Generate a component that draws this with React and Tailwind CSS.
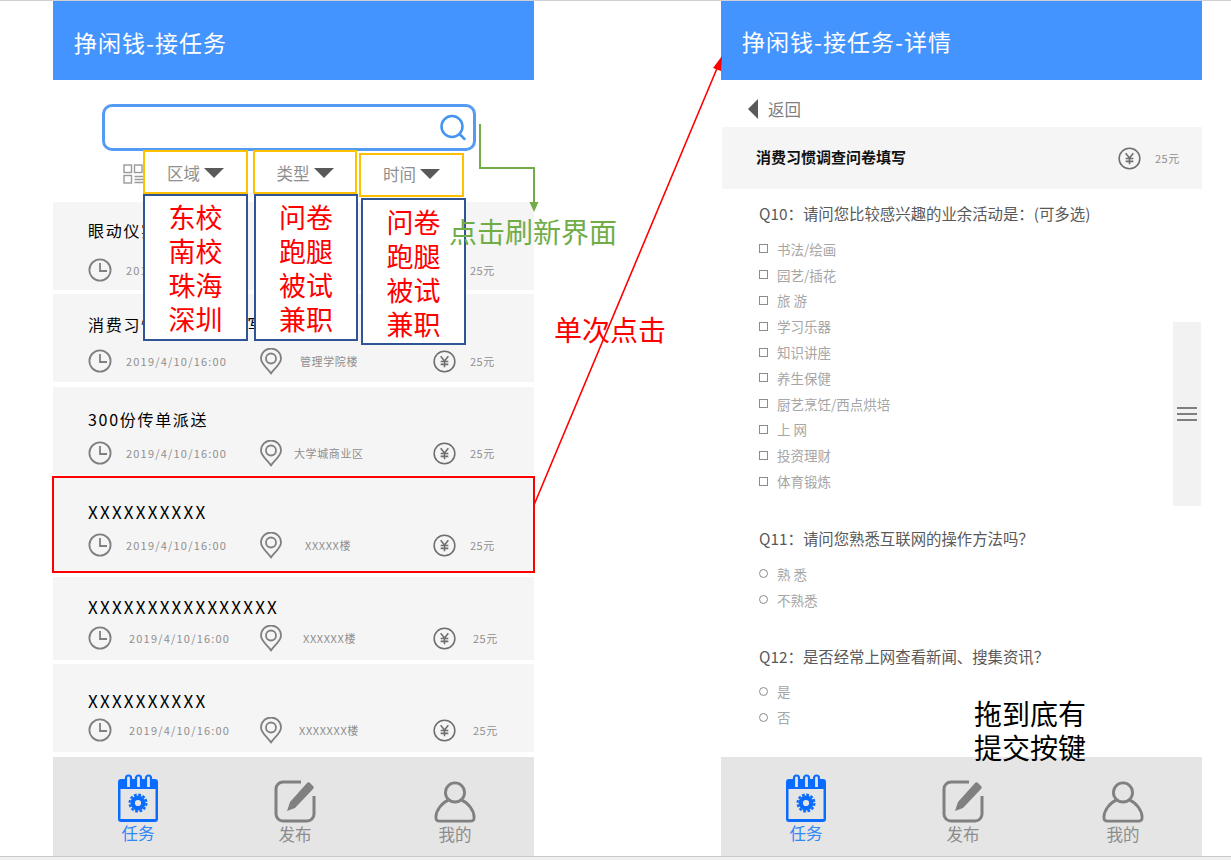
import React from 'react';

const FONT = "font-['Noto_Sans_CJK_SC','Noto_Sans',sans-serif]";

const ClockIcon = () => (
  <svg width="24" height="24" viewBox="0 0 24 24" fill="none" stroke="#808080" strokeWidth="1.8">
    <circle cx="12" cy="12" r="10.6" />
    <path d="M12 5v8h7" />
  </svg>
);

const PinIcon = () => (
  <svg width="22" height="27" viewBox="0 0 22 27" fill="none" stroke="#808080" strokeWidth="1.8">
    <path d="M11 25.5C8 20 1 16.500 1 10.500a10 10 0 0 1 20 0c0 6-7 9.500-10 15z" strokeLinejoin="round" />
    <circle cx="11" cy="10.500" r="5" />
  </svg>
);

const YuanIcon = () => (
  <svg width="23" height="23" viewBox="0 0 24 24" fill="none" stroke="#6e6e6e" strokeWidth="1.6">
    <circle cx="12" cy="12" r="10.8" />
    <path d="M8 6.500l4 5 4-5M12 11.500V18M8 12h8M8 15h8" />
  </svg>
);

const SearchIcon = () => (
  <svg width="28" height="28" viewBox="0 0 28 28" fill="none" stroke="#4394f0" strokeWidth="2.5">
    <circle cx="13" cy="12.500" r="10.500" />
    <path d="M20.500 20l5 5" strokeLinecap="round" />
  </svg>
);

const GridIcon = () => (
  <svg width="20" height="20" viewBox="0 0 20 20" fill="none" stroke="#9a9a9a" strokeWidth="1.4">
    <rect x="1" y="1" width="7.500" height="7.500" />
    <rect x="11.500" y="1" width="7.500" height="7.500" />
    <rect x="1" y="11.500" width="7.500" height="7.500" />
    <path d="M11.500 12.500H20M11.500 15.500H20M11.500 18.500H20" />
  </svg>
);

const TaskIcon = () => (
  <svg width="42" height="48" viewBox="0 0 42 48" fill="none">
    <path d="M4 5h34a3 3 0 0 1 3 3v37a3 3 0 0 1-3 3H4a3 3 0 0 1-3-3V8a3 3 0 0 1 3-3z" fill="#0a6cff" />
    <rect x="3.500" y="15" width="35" height="30" fill="#e5e5e5" />
    <path d="M9 13V4a2.500 2.500 0 0 1 5 0v9M19 13V4a2.500 2.500 0 0 1 5 0v9M29 13V4a2.500 2.500 0 0 1 5 0v9" stroke="#0a6cff" strokeWidth="2.2" fill="#e5e5e5" />
    <circle cx="21" cy="29" r="5.300" stroke="#0a6cff" strokeWidth="4.400" />
    <circle cx="21" cy="29" r="8.400" stroke="#0a6cff" strokeWidth="2.200" strokeDasharray="2.800 1.600" />
  </svg>
);

const EditIcon = () => (
  <svg width="42" height="44" viewBox="0 0 42 44" fill="none">
    <path d="M27 3H9a7 7 0 0 0-7 7v25a7 7 0 0 0 7 7h24a7 7 0 0 0 7-7V17" stroke="#808080" strokeWidth="3" />
    <path d="M13 32l3-9L33 4a2 2 0 0 1 3 0l3 3a2 2 0 0 1 0 3L21 29z" fill="#808080" />
  </svg>
);

const UserIcon = () => (
  <svg width="42" height="42" viewBox="0 0 44 44" fill="none" stroke="#808080" strokeWidth="3">
    <circle cx="22" cy="12" r="10" />
    <path d="M15 20C8 23 2 31 2 38c0 3 1 4 4 4h32c3 0 4-1 4-4 0-7-6-15-13-18" />
  </svg>
);

const NavBar = () => (
  <div className="flex h-[99px] w-full bg-[#e5e5e5]">
    <div className="ml-[64px] mt-[17px] flex w-[42px] flex-col items-center">
      <TaskIcon />
      <span className="whitespace-nowrap text-[16.500px] leading-[22px] text-[#2f88f5]">任务</span>
    </div>
    <div className="ml-[115px] mt-[22px] flex w-[42px] flex-col items-center">
      <EditIcon />
      <span className="whitespace-nowrap text-[16.500px] leading-[22px] text-[#8c8c8c]">发布</span>
    </div>
    <div className="ml-[117px] mt-[24px] flex w-[44px] flex-col items-center">
      <UserIcon />
      <span className="whitespace-nowrap text-[16.500px] leading-[22px] text-[#8c8c8c]">我的</span>
    </div>
  </div>
);

const Header = ({ title, pad }) => (
  <div className={`flex h-20 items-center bg-[#4394ff] pl-[21px] text-[23px] tracking-[1px] text-white ${pad}`}>{title}</div>
);

const CJK_TITLE = 'text-[16px] tracking-[1.7px]';
const X_TITLE = 'text-[17px] tracking-[2.2px]';

const tasks = [
  { id: 1, box: 'mt-[5px] h-[88px] pt-[16px]', metaTop: 'mt-[13px]', titleCls: CJK_TITLE, title: '眼动仪实验被试招募', place: '', dateCls: 'pl-[14px]', placeCls: 'pl-[18px]', priceCls: 'ml-[14px]' },
  { id: 2, box: 'mt-[4px] h-[88px] pt-[18px]', metaTop: 'mt-[10px]', titleCls: CJK_TITLE, title: '消费习惯调查问卷填写', place: '管理学院楼', dateCls: 'pl-[14px]', placeCls: 'pl-[18px]', priceCls: 'ml-[14px]' },
  { id: 3, box: 'mt-[5px] h-[88px] pt-[20px]', metaTop: 'mt-[7px]', titleCls: CJK_TITLE, title: '300份传单派送', place: '大学城商业区', dateCls: 'pl-[14px]', placeCls: 'pl-[12px]', priceCls: 'ml-[14px]' },
  { id: 4, box: 'mt-[2px] h-[95px] pt-[23px]', metaTop: 'mt-[6px]', titleCls: X_TITLE, title: 'XXXXXXXXXX', place: 'XXXXX楼', dateCls: 'pl-[14px]', placeCls: 'pl-[23px]', priceCls: 'ml-[14px]' },
  { id: 5, box: 'mt-[5px] h-[83px] pt-[18px]', metaTop: 'mt-[4px]', titleCls: X_TITLE, title: 'XXXXXXXXXXXXXXXX', place: 'XXXXXX楼', dateCls: 'pl-[17px]', placeCls: 'pl-[21px]', priceCls: 'ml-[17px]' },
  { id: 6, box: 'mt-[4px] h-[88px] pt-[25px]', metaTop: 'mt-[2px]', titleCls: X_TITLE, title: 'XXXXXXXXXX', place: 'XXXXXXX楼', dateCls: 'pl-[17px]', placeCls: 'pl-[17px]', priceCls: 'ml-[17px]' },
];

const TaskCard = ({ task }) => (
  <div className={`bg-[#f5f5f5] ${task.box}`}>
    <div className={`ml-[35px] h-[24px] whitespace-nowrap leading-[24px] text-black ${task.titleCls}`}>{task.title}</div>
    <div className={`ml-[35px] flex h-[30px] items-center ${task.metaTop}`}>
      <ClockIcon />
      <span className={`w-[148px] text-[11px] tracking-[1.2px] text-[#8f8f8f] ${task.dateCls}`}>2019/4/10/16:00</span>
      <PinIcon />
      <span className={`w-[151px] whitespace-nowrap text-[11px] tracking-[0.6px] text-[#8f8f8f] ${task.placeCls}`}>{task.place}</span>
      <YuanIcon />
      <span className={`whitespace-nowrap text-[11px] tracking-[0.5px] text-[#8f8f8f] ${task.priceCls}`}>25元</span>
    </div>
  </div>
);

const Question = ({ title, className, children }) => (
  <div className={`pl-[38px] ${className}`}>
    <div className="h-[24px] whitespace-nowrap text-[15.400px] leading-[24px] text-[#595959]">{title}</div>
    {children}
  </div>
);

const Opt = ({ text, round }) => (
  <div className="flex h-[25.800px] items-center text-[13.500px] text-[#a6a6a6]">
    <span className={`h-[9px] w-[9px] border border-[#8c8c8c] ${round ? 'rounded-full' : ''}`} />
    <span className="ml-[9px]">{text}</span>
  </div>
);

const hobbies = ['书法/绘画', '园艺/插花', '旅 游', '学习乐器', '知识讲座', '养生保健', '厨艺烹饪/西点烘培', '上 网', '投资理财', '体育锻炼'];

const PopColumn = ({ label, items, wrap, top, bottom }) => (
  <div className={`absolute flex flex-col ${wrap}`}>
    <div className={`flex items-center justify-center border-2 border-[#ffc000] text-[16.500px] text-[#8f8f8f] ${top}`}>
      {label}
      <span className="ml-[4px] h-0 w-0 border-x-[10px] border-t-[10px] border-x-transparent border-t-[#595959]" />
    </div>
    <div className={`flex flex-col items-center border-2 border-[#2f5597] bg-white text-[27px] leading-[34px] text-[#ff0000] ${bottom}`}>
      {items.map((item) => (
        <div key={item}>{item}</div>
      ))}
    </div>
  </div>
);

export default function App() {
  return (
    <div className={`relative h-[860px] w-[1231px] overflow-hidden bg-white ${FONT}`}>
      <div className="flex h-[856px]">
        {/* left phone */}
        <div className="ml-[53px] flex w-[481px] flex-col">
          <Header title="挣闲钱-接任务" pad="pt-[5px]" />
          <div className="ml-[49px] mt-[24px] flex h-[47px] w-[374px] items-center justify-end rounded-[10px] border-[3px] border-[#549bf3] pr-[6px]">
            <SearchIcon />
          </div>
          <div className="ml-[70px] mt-[13px] h-[20px]">
            <GridIcon />
          </div>
          <div className="mt-[13px]">
            {tasks.map((task) => (
              <TaskCard key={task.id} task={task} />
            ))}
          </div>
          <div className="mt-auto">
            <NavBar />
          </div>
        </div>

        {/* right phone */}
        <div className="ml-[187px] flex w-[481px] flex-col">
          <Header title="挣闲钱-接任务-详情" pad="pt-[3px]" />
          <div className="ml-[27px] mt-[17px] flex h-[24px] items-center text-[16.500px] text-[#7f7f7f]">
            <span className="h-0 w-0 border-y-[10px] border-r-[10px] border-y-transparent border-r-[#595959]" />
            <span className="ml-[10px]">返回</span>
          </div>
          <div className="ml-[1px] mt-[6px] flex h-[62px] items-center bg-[#f5f5f5] pl-[34px]">
            <span className="w-[362px] pb-[2px] text-[15px] font-bold text-[#111111]">消费习惯调查问卷填写</span>
            <YuanIcon />
            <span className="ml-[14px] text-[11px] tracking-[0.5px] text-[#8f8f8f]">25元</span>
          </div>
          <Question title="Q10：请问您比较感兴趣的业余活动是：(可多选)" className="mt-[12px]">
            <div className="mt-[11px]">
              {hobbies.map((h) => (
                <Opt key={h} text={h} />
              ))}
            </div>
          </Question>
          <Question title="Q11：请问您熟悉互联网的操作方法吗？" className="mt-[32px]">
            <div className="mt-[11px]">
              <Opt text="熟 悉" round />
              <Opt text="不熟悉" round />
            </div>
          </Question>
          <Question title="Q12：是否经常上网查看新闻、搜集资讯？" className="mt-[31px]">
            <div className="mt-[11px]">
              <Opt text="是" round />
              <Opt text="否" round />
            </div>
          </Question>
          <div className="mt-auto">
            <NavBar />
          </div>
        </div>
      </div>
      <div className="h-[4px] border-t border-[#c8c8c8] bg-[#f0f0f0]" />
      <div className="absolute left-0 top-0 h-px w-full bg-[#d0d0d0]" />

      {/* scroll handle on the detail page */}
      <div className="absolute left-[1173px] top-[322px] flex h-[184px] w-[28px] flex-col items-center justify-center gap-[4px] bg-[#f2f2f2]">
        <span className="h-[2px] w-[20px] bg-[#7f7f7f]" />
        <span className="h-[2px] w-[20px] bg-[#7f7f7f]" />
        <span className="h-[2px] w-[20px] bg-[#7f7f7f]" />
      </div>

      {/* filter dropdown annotations */}
      <PopColumn label="区域" items={['东校', '南校', '珠海', '深圳']} wrap="left-[143px] top-[150px] w-[105px]" top="h-[44px] pt-[2px]" bottom="h-[147px] pt-[4px]" />
      <PopColumn label="类型" items={['问卷', '跑腿', '被试', '兼职']} wrap="left-[253px] top-[150px] w-[105px]" top="h-[44px] w-[104px] pt-[2px]" bottom="ml-[1px] h-[147px] pt-[4px]" />
      <PopColumn label="时间" items={['问卷', '跑腿', '被试', '兼职']} wrap="left-[359px] top-[153px] w-[107px]" top="h-[44px] w-[105px] pb-[2px]" bottom="ml-[2px] mt-[1px] h-[147px] w-[105px] pt-[5px]" />

      {/* flow arrows */}
      <svg className="absolute left-0 top-0" width="1231" height="860" fill="none">
        <path d="M480 124V168H534V204" stroke="#70ad47" strokeWidth="2" />
        <path d="M529.500 202h9l-4.500 10z" fill="#70ad47" />
        <path d="M534 505L718 66" stroke="#ff0000" strokeWidth="1.6" />
        <path d="M722 56l-1 15-8-3z" fill="#ff0000" />
        <rect x="53" y="477" width="481" height="95" stroke="#ff0000" strokeWidth="2" />
      </svg>

      <div className="absolute left-[449px] top-[211px] whitespace-nowrap text-[28px] leading-[40px] text-[#70ad47]">点击刷新界面</div>
      <div className="absolute left-[554px] top-[309px] whitespace-nowrap text-[28px] leading-[40px] text-[#ff0000]">单次点击</div>
      <div className="absolute left-[974px] top-[696px] whitespace-nowrap text-[28px] leading-[34px] text-black">
        拖到底有
        <br />
        提交按键
      </div>
    </div>
  );
}
